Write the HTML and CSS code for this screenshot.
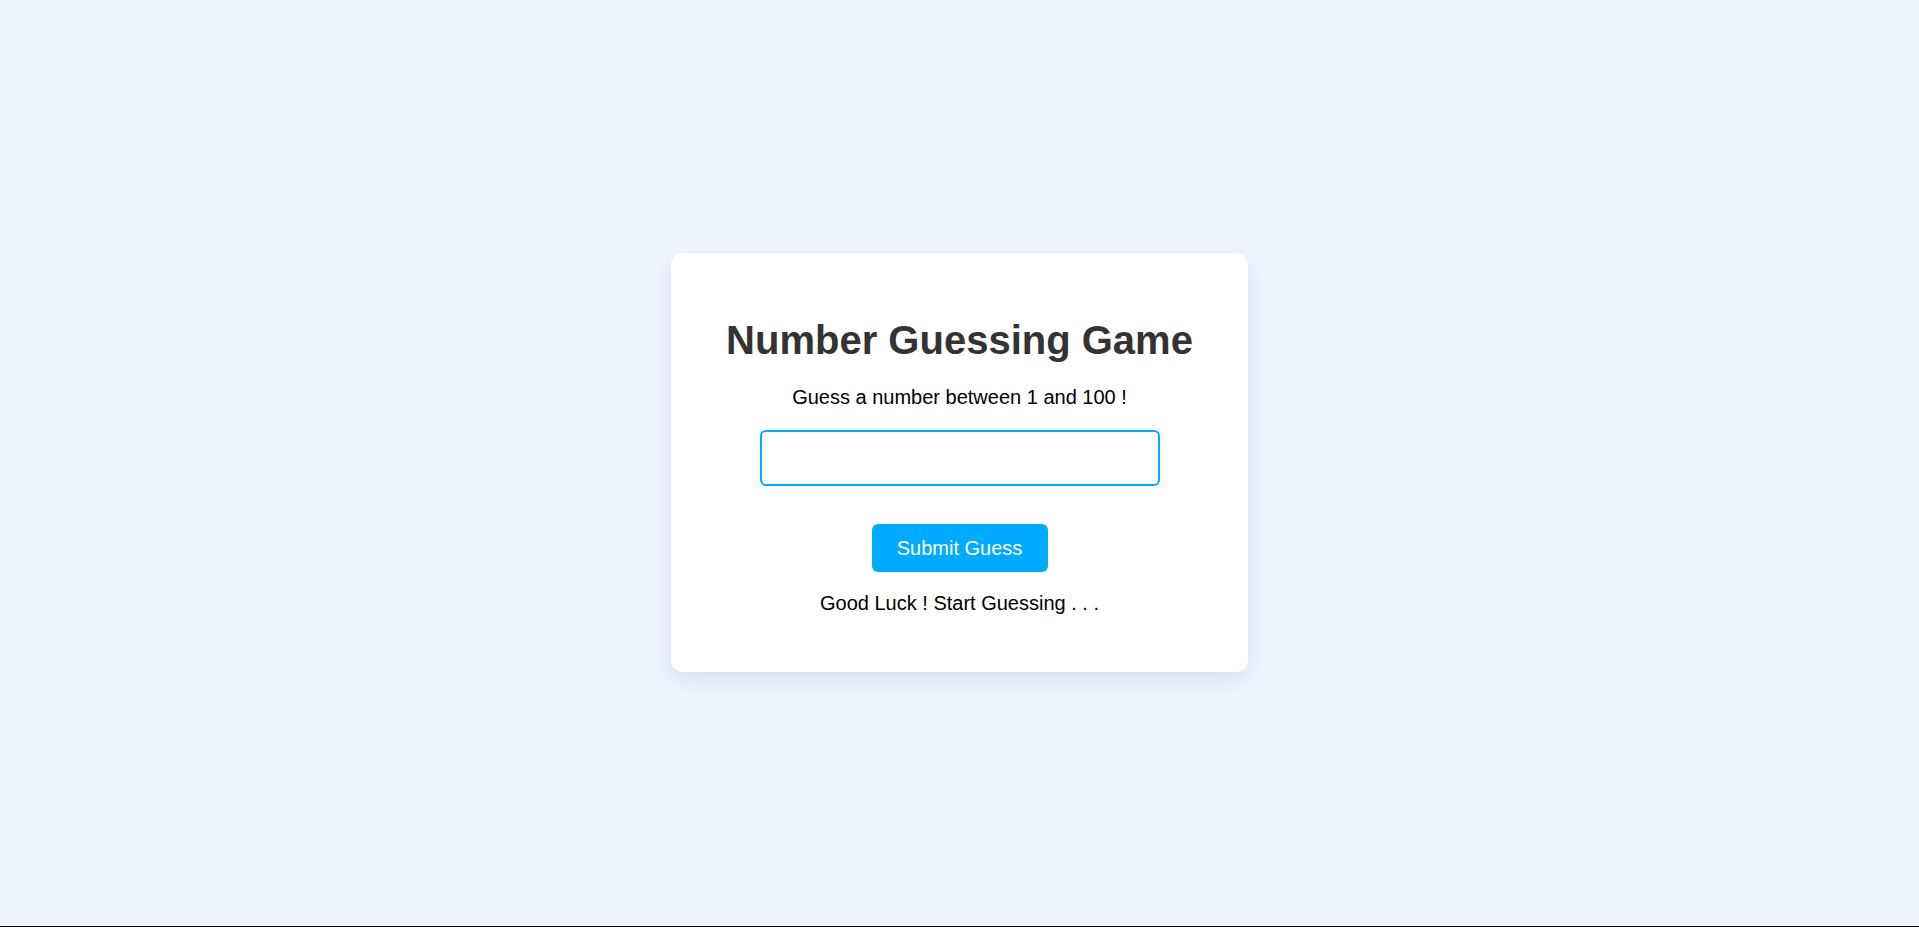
FILE: index.html
```html
<!DOCTYPE html>
<html lang="en">
<head>
<meta charset="UTF-8">
<title>Number Guessing Game</title>
<link rel="stylesheet" href="styles.css">
</head>
<body>
<main class="page">
  <section class="card">
    <h1 class="title">Number Guessing Game</h1>
    <p class="prompt">Guess a number between 1 and 100 !</p>
    <input class="guess-input" type="number">
    <button class="submit-btn" type="button">Submit Guess</button>
    <p class="status">Good Luck ! Start Guessing . . .</p>
  </section>
</main>
</body>
</html>
```

FILE: styles.css
```css
* {
  box-sizing: border-box;
}

html, body {
  margin: 0;
  padding: 0;
}

body {
  background: #eef6ff;
  font-family: "Liberation Sans", Arial, sans-serif;
  color: #000;
}

.page {
  height: 100vh;
  display: flex;
  align-items: center;
  justify-content: center;
  padding-bottom: 2px;
  border-bottom: 1px solid #000;
}

.card {
  width: 577px;
  background: #fff;
  border-radius: 12px;
  box-shadow: 0 8px 20px rgba(40, 70, 110, 0.12);
  padding: 40px 40px 17px;
  display: flex;
  flex-direction: column;
  align-items: center;
  text-align: center;
}

.title {
  margin: 24px 0 0;
  font-size: 40px;
  font-weight: 700;
  line-height: 46px;
  color: #333;
}

.prompt {
  margin: 23px 0 0;
  font-size: 20px;
  line-height: 23px;
}

.guess-input {
  margin-top: 21px;
  width: 400px;
  height: 56px;
  border: 2px solid #00aaff;
  border-radius: 6px;
  outline: none;
  font-size: 20px;
  padding: 0 12px;
  background: #fff;
}

.submit-btn {
  margin-top: 38px;
  width: 176px;
  height: 48px;
  border: none;
  border-radius: 6px;
  background: #00aaff;
  color: #fff;
  font-family: "Liberation Sans", Arial, sans-serif;
  font-size: 20px;
  line-height: 24px;
  padding: 0;
  cursor: pointer;
}

.status {
  margin: 20px 0 40px;
  font-size: 20px;
  line-height: 23px;
}
```
